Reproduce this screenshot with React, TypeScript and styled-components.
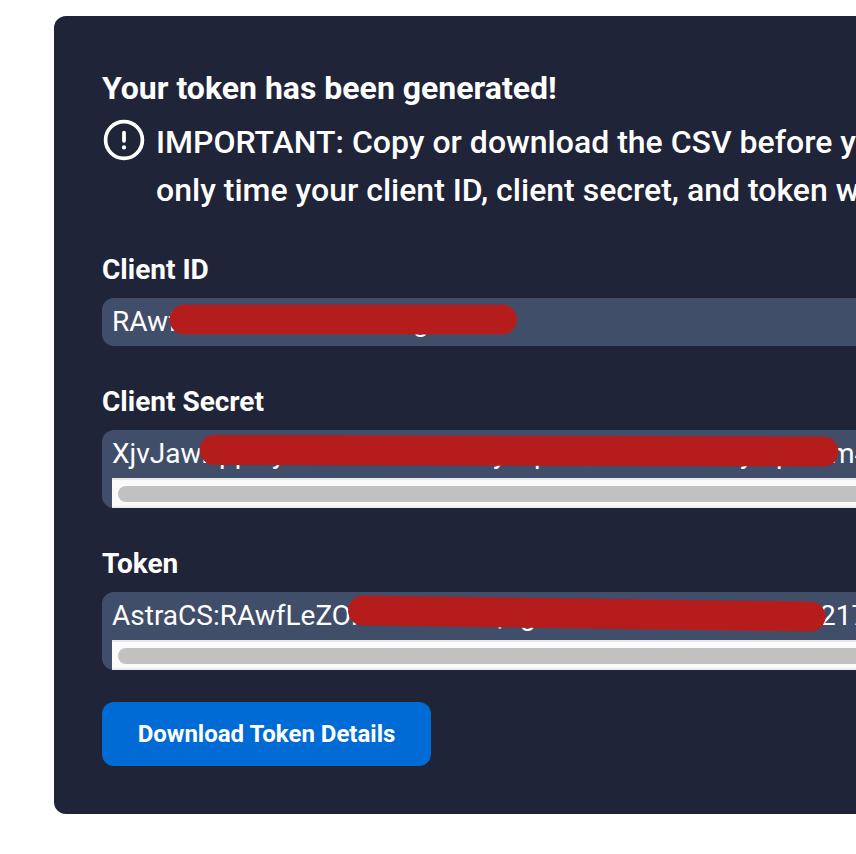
import React from "react";
import styled, { createGlobalStyle } from "styled-components";

const GlobalStyle = createGlobalStyle`
  * { box-sizing: border-box; }
  html, body { margin: 0; background: #fff; overflow: hidden; }
  body { font-family: Roboto, "Liberation Sans", sans-serif; color: #fff; }
`;

const Page = styled.main`
  width: 100%;
  height: 854px;
  padding: 16px 0 40px 54px;
  overflow: hidden;
`;

const Panel = styled.section`
  width: 1500px;
  height: 798px;
  padding: 48px;
  border-radius: 12px;
  background: #202438;
`;

const Title = styled.h1`
  margin: 0;
  font-size: 32px;
  line-height: 48px;
  font-weight: 700;
  white-space: nowrap;
`;

const Notice = styled.div`
  display: flex;
  gap: 10px;
  margin-top: 6px;
  height: 96px;
`;

const NoticeIcon = styled.svg`
  flex: none;
  width: 44px;
  height: 44px;
`;

const NoticeText = styled.p`
  margin: 0;
  font-size: 32px;
  line-height: 48px;
  font-weight: 500;
  white-space: nowrap;
`;

const Group = styled.div`
  margin-top: 35px;
`;

const Label = styled.h2`
  margin: 0 0 7px;
  font-size: 28px;
  line-height: 42px;
  font-weight: 700;
`;

const Field = styled.div`
  position: relative;
  padding-left: 10px;
  border-radius: 12px;
  background: #414e6a;
  overflow: hidden;
`;

const Value = styled.div`
  display: flex;
  height: 48px;
  font-size: 28px;
  line-height: 48px;
  white-space: nowrap;
`;

const Fragment = styled.span<{ $width: number }>`
  flex: none;
  width: ${(p) => p.$width}px;
`;

const ScrollTrack = styled.div`
  height: 30px;
  padding: 6px;
  border-top: 2px solid #e8e8e8;
  border-bottom: 2px solid #ededed;
  background: #fafafa;
`;

const ScrollThumb = styled.div`
  height: 16px;
  width: 1200px;
  border-radius: 8px;
  background: #c1c1c1;
`;

const Marker = styled.svg`
  position: absolute;
  left: 0;
  top: 0;
  width: 760px;
  height: 48px;
`;

const DownloadButton = styled.button`
  display: block;
  width: 329px;
  height: 64px;
  margin-top: 32px;
  padding: 0;
  border: 0;
  border-radius: 12px;
  background: #006bd4;
  color: #fff;
  font: 700 24px/64px Roboto, "Liberation Sans", sans-serif;
`;

type Part = [text: string, width: number];

interface Credential {
  label: string;
  parts: Part[];
  stroke: [number, number, number, number];
  scroll: boolean;
}

const credentials: Credential[] = [
  {
    label: "Client ID",
    parts: [["RAwf", 301], ["g", 20]],
    stroke: [82.5, 21.5, 400, 21.5],
    scroll: false,
  },
  {
    label: "Client Secret",
    parts: [["XjvJawh", 107], ["pp", 53], ["y", 221], ["y", 41], ["p", 37], ["Q", 169], ["y", 36], ["p", 54], ["m4", 60]],
    stroke: [112.5, 20, 721.5, 21.5],
    scroll: true,
  },
  {
    label: "Token",
    parts: [["AstraCS:RAwfLeZOh", 386], [",", 22], ["g", 300], ["217", 60]],
    stroke: [261, 18.5, 708.5, 24.5],
    scroll: true,
  },
];

function CredentialField({ label, parts, stroke, scroll }: Credential) {
  const [x1, y1, x2, y2] = stroke;
  return (
    <Group>
      <Label>{label}</Label>
      <Field>
        <Value>
          {parts.map(([text, width], i) => (
            <Fragment key={i} $width={width}>{text}</Fragment>
          ))}
        </Value>
        {scroll && (
          <ScrollTrack>
            <ScrollThumb />
          </ScrollTrack>
        )}
        <Marker aria-hidden="true">
          <line x1={x1} y1={y1} x2={x2} y2={y2} stroke="#b51d1c" strokeWidth="30" strokeLinecap="round" />
        </Marker>
      </Field>
    </Group>
  );
}

export default function App() {
  return (
    <>
      <GlobalStyle />
      <Page>
        <Panel>
          <Title>Your token has been generated!</Title>
          <Notice>
            <NoticeIcon viewBox="0 0 44 44" fill="none" stroke="#fff" strokeLinecap="round">
              <circle cx="22" cy="22" r="18.4" strokeWidth="3.7" />
              <path d="M22 14.6v8.2" strokeWidth="3.8" />
              <circle cx="22" cy="29.4" r="2.1" fill="#fff" stroke="none" />
            </NoticeIcon>
            <NoticeText>
              IMPORTANT: Copy or download the CSV before you
              <br />
              only time your client ID, client secret, and token will
            </NoticeText>
          </Notice>
          {credentials.map((c) => (
            <CredentialField key={c.label} {...c} />
          ))}
          <DownloadButton>Download Token Details</DownloadButton>
        </Panel>
      </Page>
    </>
  );
}
